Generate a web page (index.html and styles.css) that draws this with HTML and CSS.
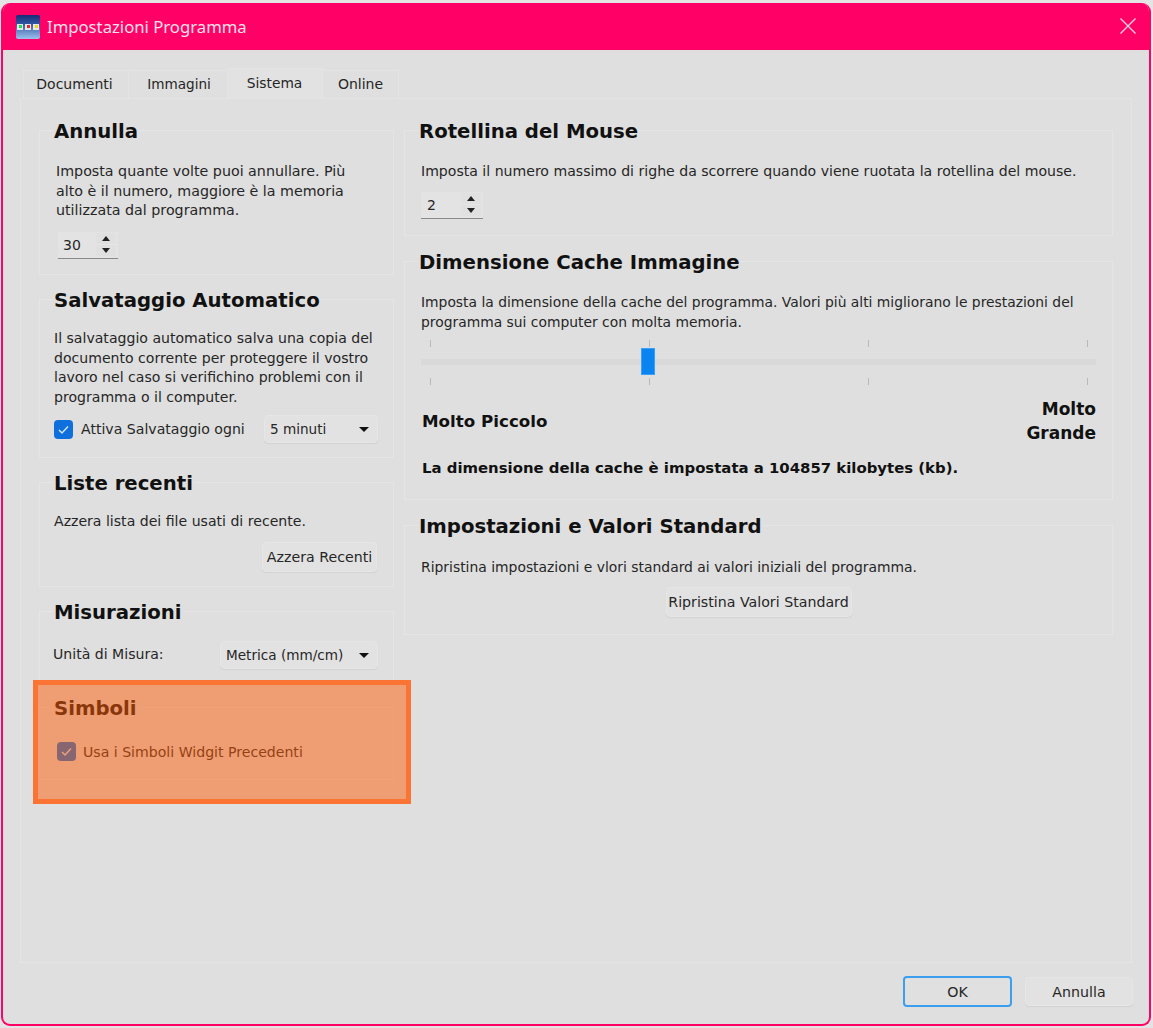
FILE: index.html
```html
<!DOCTYPE html>
<html lang="it">
<head>
<meta charset="utf-8">
<title>Impostazioni Programma</title>
<link rel="stylesheet" href="styles.css">
</head>
<body>
<div class="window">
  <header class="titlebar">
    <div class="appicon"><i class="dot green"></i><i class="dot red"></i><i class="dot yellow"></i></div>
    <span class="wintitle">Impostazioni Programma</span>
    <svg class="close" width="16" height="16" viewBox="0 0 16 16"><path d="M.5 .5 15.5 15.5M15.5 .5 .5 15.5" stroke="#fbd0e0" stroke-width="1.4" fill="none"/></svg>
  </header>
  <main class="content">
    <nav class="tabs">
      <div class="tab tab-doc">Documenti</div>
      <div class="tab tab-img">Immagini</div>
      <div class="tab tab-sys active">Sistema</div>
      <div class="tab tab-onl">Online</div>
    </nav>
    <section class="panel">
      <div class="col col-left">
        <div class="group g-annulla">
          <h2>Annulla</h2>
          <p class="txt indent">Imposta quante volte puoi annullare. Più<br>alto è il numero, maggiore è la memoria<br>utilizzata dal programma.</p>
          <div class="spin spin-a"><span>30</span><div class="spinbtns"><b class="up"></b><b class="down"></b></div></div>
        </div>
        <div class="group g-salva">
          <h2>Salvataggio Automatico</h2>
          <p class="txt">Il salvataggio automatico salva una copia del<br>documento corrente per proteggere il vostro<br>lavoro nel caso si verifichino problemi con il<br>programma o il computer.</p>
          <div class="row">
            <label class="check check-auto"><span class="box"><svg width="19" height="19" viewBox="0 0 19 19"><path d="M5 10l3 3 6-6.5" stroke="#cfe6fb" stroke-width="1.5" fill="none"/></svg></span>Attiva Salvataggio ogni</label>
            <div class="select sel-min"><span>5 minuti</span><i class="caret"></i></div>
          </div>
        </div>
        <div class="group g-liste">
          <h2>Liste recenti</h2>
          <p class="txt">Azzera lista dei file usati di recente.</p>
          <div class="btnrow end"><button class="btn btn-recent">Azzera Recenti</button></div>
        </div>
        <div class="group g-misure">
          <h2>Misurazioni</h2>
          <div class="row">
            <span class="txt lab">Unità di Misura:</span>
            <div class="select sel-met"><span>Metrica (mm/cm)</span><i class="caret"></i></div>
          </div>
        </div>
        <div class="group g-simboli">
          <h2>Simboli</h2>
          <label class="check check-sim"><span class="box"><svg width="19" height="19" viewBox="0 0 19 19"><path d="M5 10l3 3 6-6.5" stroke="#cfe6fb" stroke-width="1.5" fill="none"/></svg></span>Usa i Simboli Widgit Precedenti</label>
          <div class="highlight"></div>
        </div>
      </div>
      <div class="col col-right">
        <div class="group g-rotella">
          <h2>Rotellina del Mouse</h2>
          <p class="txt">Imposta il numero massimo di righe da scorrere quando viene ruotata la rotellina del mouse.</p>
          <div class="spin spin-b"><span>2</span><div class="spinbtns"><b class="up"></b><b class="down"></b></div></div>
        </div>
        <div class="group g-cache">
          <h2>Dimensione Cache Immagine</h2>
          <p class="txt">Imposta la dimensione della cache del programma. Valori più alti migliorano le prestazioni del<br>programma sui computer con molta memoria.</p>
          <div class="slider">
            <div class="ticks"><i></i><i></i><i></i><i></i></div>
            <div class="groove"><div class="handle"></div></div>
            <div class="ticks"><i></i><i></i><i></i><i></i></div>
          </div>
          <div class="scale"><strong>Molto Piccolo</strong><strong class="big">Molto<br>Grande</strong></div>
          <p class="info">La dimensione della cache è impostata a 104857 kilobytes (kb).</p>
        </div>
        <div class="group g-standard">
          <h2>Impostazioni e Valori Standard</h2>
          <p class="txt">Ripristina impostazioni e vlori standard ai valori iniziali del programma.</p>
          <div class="btnrow center"><button class="btn btn-std">Ripristina Valori Standard</button></div>
        </div>
      </div>
    </section>
    <footer class="footer">
      <button class="btn btn-ok">OK</button>
      <button class="btn btn-cancel">Annulla</button>
    </footer>
  </main>
</div>
</body>
</html>
```
FILE: styles.css
```css
* { box-sizing: border-box; }
html, body { margin: 0; height: 100%; }
body {
  background: #e4e4e4;
  padding: 3px 2px 2px 1px;
  font-family: "DejaVu Sans", sans-serif;
  font-size: 14px;
  color: #262626;
  overflow: hidden;
}
.window {
  height: 1023px;
  display: flex;
  flex-direction: column;
  background: #dfdfdf;
  border: 2px solid #ff0066;
  border-top: 0;
  border-radius: 9px;
  overflow: hidden;
}
.titlebar {
  height: 47px;
  flex: none;
  background: #ff0066;
  display: flex;
  align-items: center;
  padding: 0 14px 0 13px;
  margin: 0 -2px;
}
.appicon {
  width: 24px;
  height: 24px;
  border-radius: 2px;
  background: linear-gradient(#152c78 0%, #30539f 35%, #9cc1ee 100%);
  display: flex;
  justify-content: center;
  gap: 2px;
  padding-top: 9px;
  margin-left: 2px;
}
.dot { width: 6px; height: 6px; background: #e6e6e6; position: relative; }
.dot::after { content: ""; position: absolute; inset: 1.5px; }
.green::after { background: #22e04a; }
.red::after { background: #e8262a; }
.yellow::after { background: #f5d020; }
.wintitle { margin-left: 7px; margin-top: -1px; font-size: 16.7px; color: #fde0ea; font-family: "Noto Sans", sans-serif; flex: 1; }
.close { flex: none; margin-right: 1px; margin-top: -1px; }

.content { flex: 1; display: flex; flex-direction: column; padding: 18px 17px 0 17px; }
.tabs { display: flex; height: 30px; padding-left: 3px; align-items: flex-end; }
.tab {
  height: 28px;
  border: 1px solid #e4e4e4;
  border-bottom: 0;
  border-left-width: 0;
  display: flex;
  align-items: center;
  justify-content: center;
  padding-bottom: 1px;
  font-size: 14px;
}
.tab-doc { width: 106px; border-left-width: 1px; padding-right: 3px; }
.tab-img { width: 99px; padding-left: 2px; font-size: 13.6px; }
.tab-sys { width: 95px; font-size: 13.8px; padding-right: 1px; }
.tab-onl { width: 76px; }
.tab.active { height: 30px; background: #e2e2e2; padding-bottom: 2px; }

.panel {
  height: 865px;
  flex: none;
  border: 1px solid #e4e4e4;
  padding: 31px 18px 0;
  display: flex;
  gap: 10px;
}
.col { display: flex; flex-direction: column; }
.col-left { width: 355px; gap: 24px; }
.col-right { width: 709px; gap: 25px; }

.group { border: 1px solid #e5e5e5; position: relative; }
.group h2 {
  margin: -14px 0 0 13px;
  padding: 0 1px;
  width: fit-content;
  height: 26px;
  line-height: 30px;
  font-size: 19.7px;
  font-weight: 700;
  color: #111;
  background: #dfdfdf;
}
.txt { margin: 0; line-height: 19.5px; font-size: 14.08px; }
.g-annulla { height: 145px; }
.g-annulla .txt { margin: 19px 0 0 16px; font-size: 14.25px; }
.g-salva { height: 159px; padding: 0 15px 0 14px; }
.g-salva h2 { margin-left: -1px; }
.g-salva .txt { margin-top: 17px; }
.g-liste { height: 105px; padding: 0 15px 0 14px; }
.g-liste h2 { margin-left: -1px; }
.g-liste .txt { margin-top: 17px; }
.g-misure { height: 72px; padding: 0 15px 0 13px; }
.g-misure h2 { margin-left: 0; }
.g-simboli { height: 73px; padding: 0 15px 0 14px; }
.g-simboli h2 { margin-left: -1px; }

.g-rotella { height: 106px; padding: 0 16px; }
.g-rotella h2, .g-cache h2, .g-standard h2 { margin-left: -3px; }
.g-rotella .txt { margin-top: 19px; }
.g-cache { height: 239px; padding: 0 16px; }
.g-cache .txt { margin-top: 19px; font-size: 13.87px; }
.g-standard { height: 110px; padding: 0 16px; }
.g-standard .txt { margin-top: 20px; font-size: 13.9px; }

.spin {
  height: 27px;
  display: flex;
  align-items: center;
  justify-content: space-between;
  border-bottom: 1px solid #8a8a8a;
  background: #e3e3e3;
  padding: 0 2px 0 5px;
  font-size: 14px;
}
.spin-a { width: 60px; margin: 11px 0 0 18px; }
.spin-b { width: 62px; margin-top: 10px; padding-left: 6px; }
.spinbtns { width: 20px; display: flex; flex-direction: column; gap: 1px; background: #e6e6e6; }
.spinbtns b { height: 11px; display: flex; align-items: center; justify-content: center; background: #e0e0e0; }
.up::after, .down::after { content: ""; border-left: 4px solid transparent; border-right: 4px solid transparent; }
.up::after { border-bottom: 5px solid #222; }
.down::after { border-top: 5px solid #222; }

.row { display: flex; align-items: center; justify-content: space-between; }
.g-salva .row { margin-top: 8px; }
.g-misure .row { margin-top: 17px; }
.check { display: flex; align-items: center; gap: 7px; font-size: 14.1px; }
.check-auto { gap: 8px; }
.check-sim { margin: 22px 0 0 3px; }
.box {
  width: 19px;
  height: 19px;
  border-radius: 4px;
  background: #0f6fdc;
  display: block;
  flex: none;
}
.box svg { display: block; }
.select {
  height: 28px;
  border: 1px solid #e6e6e6;
  border-radius: 4px;
  background: #e2e2e2;
  box-shadow: 0 1px 1px #d2d2d2;
  display: flex;
  align-items: center;
  justify-content: space-between;
  padding: 0 8px 0 4px;
  font-size: 13.6px;
}
.select span { margin-left: 1px; }
.sel-min { width: 114px; }
.sel-met { width: 158px; }
.caret { width: 0; height: 0; border-left: 5px solid transparent; border-right: 5px solid transparent; border-top: 5px solid #111; }

.btn {
  font: inherit;
  font-size: 14.2px;
  color: #262626;
  background: #e2e2e2;
  border: 1px solid #e6e6e6;
  border-radius: 4px;
  box-shadow: 0 1px 1px #d2d2d2;
  padding: 0;
  height: 30px;
}
.btnrow { display: flex; }
.end { justify-content: flex-end; margin-top: 10px; }
.center { justify-content: center; margin-top: 9px; }
.btn-recent { width: 115px; margin-right: 1px; }
.btn-std { width: 186px; }

.slider { margin-top: 8px; display: flex; flex-direction: column; }
.ticks { height: 7px; display: flex; justify-content: space-between; padding: 0 8px 0 9px; }
.ticks i { width: 1px; height: 7px; background: #b9b9b9; display: block; }
.groove { height: 6px; margin: 12px 0 13px; background: #d9d9d9; position: relative; }
.handle { position: absolute; left: 220px; top: -11px; width: 14px; height: 27px; background: #0a84f0; border: 1px solid #3aa0f5; }
.scale { display: flex; justify-content: space-between; align-items: flex-start; margin-top: 12px; font-size: 16.7px; color: #111; line-height: 24px; padding-left: 1px; }
.big { text-align: right; font-size: 17px; }
.scale strong:first-child { margin-top: 12px; }
.info { margin: 13px 0 0 1px; font-weight: 700; font-size: 14.9px; color: #111; line-height: 20px; }

.footer { flex: 1; display: flex; justify-content: flex-end; gap: 13px; padding: 13px 0 0; align-items: flex-start; }
.btn-ok { width: 109px; height: 31px; border: 2px solid #3b9eef; box-shadow: none; background: #e0e0e0; }
.btn-cancel { width: 108px; height: 29px; margin: 1px -1px 0 0; }

.highlight {
  position: absolute;
  left: -7px;
  right: -18px;
  top: -28px;
  bottom: -25px;
  background: rgba(255, 91, 5, 0.5);
  border: 5px solid #fb7434;
}
```
